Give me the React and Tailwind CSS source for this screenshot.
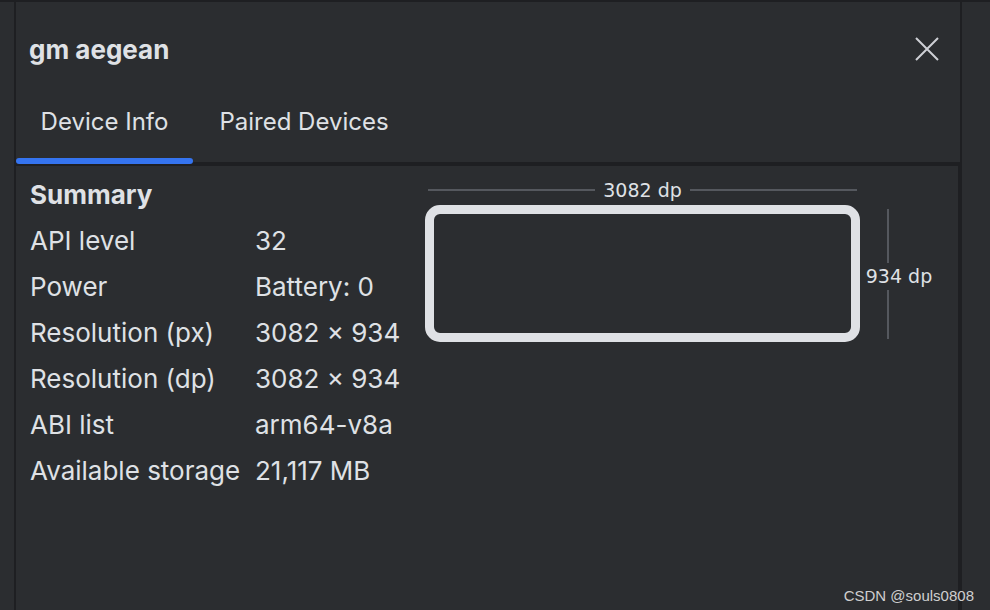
import React from 'react';

const rows = [
  ['API level', '32'],
  ['Power', 'Battery: 0'],
  ['Resolution (px)', '3082 × 934'],
  ['Resolution (dp)', '3082 × 934'],
  ['ABI list', 'arm64-v8a'],
  ['Available storage', '21,117 MB'],
];

function CloseIcon() {
  return (
    <svg width="24" height="24" viewBox="0 0 24 24" className="text-[#ced0d6]">
      <path d="M1 1 L23 23 M23 1 L1 23" stroke="currentColor" strokeWidth="2" fill="none" />
    </svg>
  );
}

function Tab({ label, active, width }) {
  return (
    <div className={`h-full flex flex-col items-center ${width}`}>
      <span className="flex-1 flex items-center pb-[8px] text-[24px] whitespace-nowrap">{label}</span>
      <div
        className={`w-full h-[6px] rounded-full relative z-10 translate-y-[2px] ${active ? 'bg-[#3574f0]' : 'bg-transparent'}`}
      />
    </div>
  );
}

function DeviceDiagram() {
  return (
    <div className="flex flex-col pt-[12px] font-['DejaVu_Sans',sans-serif] text-[19px] text-[#dfe1e5]">
      <div className="flex items-center w-[436px] h-[24px] pl-[3px] pr-[4px]">
        <div className="flex-1 h-[2px] bg-[#55585e]" />
        <span className="px-[8px] leading-none whitespace-nowrap">3082 dp</span>
        <div className="flex-1 h-[2px] bg-[#55585e]" />
      </div>
      <div className="flex items-center pt-[3px]">
        <div className="w-[435px] h-[137px] border-[9px] border-[#dfe1e5] rounded-[15px]" />
        <div className="relative ml-[3px] w-[72px] h-[130px] flex items-center justify-center">
          <div className="absolute left-[24px] top-0 bottom-0 w-[2px] bg-[#55585e]" />
          <span className="relative leading-none whitespace-nowrap bg-[#2b2d30] py-[4px] translate-y-[3px]">934 dp</span>
        </div>
      </div>
    </div>
  );
}

export default function App() {
  return (
    <div className="relative w-[990px] h-[610px] overflow-hidden bg-[#2b2d30] border-t-2 border-[#1e1f22] flex font-['Inter',sans-serif] text-[#dfe1e5]">
      <div className="w-[14px]" />
      <div className="w-[948px] flex flex-col border-x-2 border-[#1e1f22]">
        {/* header */}
        <div className="h-[160px] flex flex-col">
          <div className="flex items-center justify-between h-[94px] pl-[13px] pr-[21px]">
            <h1 className="text-[26px] font-bold">gm aegean</h1>
            <CloseIcon />
          </div>
          <div className="flex h-[66px]">
            <Tab label="Device Info" active width="w-[177px]" />
            <Tab label="Paired Devices" width="w-[222px]" />
          </div>
        </div>
        <div className="h-[4px] bg-[#1e1f22]" />
        {/* content */}
        <div className="flex-1 flex border-r-2 border-[#1e1f22] pl-[14px]">
          <div className="flex flex-col pt-[6px] w-[395px] text-[26px] leading-[46px]">
            <div className="font-bold">Summary</div>
            {rows.map(([k, v]) => (
              <div key={k} className="flex">
                <span className="w-[225px] whitespace-nowrap">{k}</span>
                <span className="whitespace-nowrap">{v}</span>
              </div>
            ))}
          </div>
          <DeviceDiagram />
        </div>
      </div>
      <div className="flex-1" />
      <div className="absolute right-[16px] bottom-[3px] text-[15px] text-[#cfcfcf] font-['Liberation_Sans',sans-serif]">
        CSDN @souls0808
      </div>
    </div>
  );
}
